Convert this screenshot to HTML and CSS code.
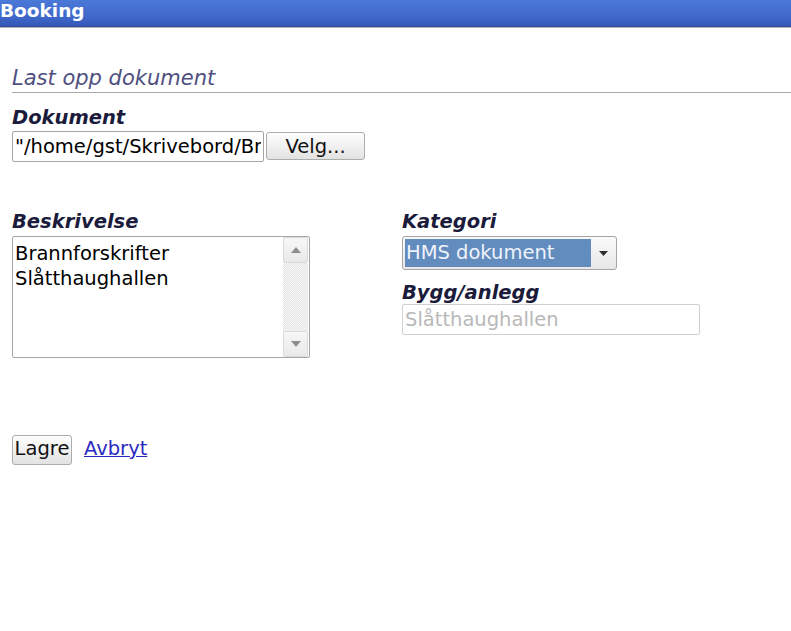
FILE: index.html
```html
<!DOCTYPE html>
<html lang="no">
<head>
<meta charset="utf-8">
<title>Booking</title>
<link rel="stylesheet" href="styles.css">
</head>
<body>
<header class="titlebar">Booking</header>
<main class="page">
  <h2 class="section-title">Last opp dokument</h2>
  <label class="label">Dokument</label>
  <div class="file-row">
    <input class="text-input file-path" type="text" value="&quot;/home/gst/Skrivebord/Brannforskrifter.pdf&quot;" readonly>
    <button class="btn browse" type="button">Velg...</button>
  </div>

  <div class="columns">
    <div class="col col-left">
      <label class="label first">Beskrivelse</label>
      <div class="textbox">
        <textarea class="textarea">Brannforskrifter
Slåtthaughallen</textarea>
        <div class="scrollbar">
          <div class="sb-btn">
            <svg width="10" height="6" viewBox="0 0 10 6"><path d="M0 6 L5 0 L10 6 Z" fill="#8e8e8e"/></svg>
          </div>
          <div class="sb-track"></div>
          <div class="sb-btn">
            <svg width="10" height="6" viewBox="0 0 10 6"><path d="M0 0 L10 0 L5 6 Z" fill="#8e8e8e"/></svg>
          </div>
        </div>
      </div>
    </div>
    <div class="col col-right">
      <label class="label first">Kategori</label>
      <div class="select">
        <span class="select-value">HMS dokument</span>
        <span class="select-arrow">
          <svg width="9" height="5" viewBox="0 0 9 5"><path d="M0 0 L9 0 L4.5 5 Z" fill="#2e2e2e"/></svg>
        </span>
      </div>
      <label class="label second">Bygg/anlegg</label>
      <input class="text-input disabled" type="text" value="Slåtthaughallen" disabled>
    </div>
  </div>

  <div class="actions">
    <button class="btn save" type="button">Lagre</button>
    <a class="link" href="#">Avbryt</a>
  </div>
</main>
</body>
</html>
```

FILE: styles.css
```css
html, body {
  margin: 0;
  background: #ffffff;
}

body {
  font-family: "DejaVu Sans", "Noto Sans", sans-serif;
  font-size: 19.5px;
  color: #000;
}

.titlebar {
  height: 26px;
  line-height: 22px;
  background: linear-gradient(#4b79d8, #3f67ca 65%, #3457b6);
  border-bottom: 1px solid #2d4c9e;
  box-shadow: 0 1px 0 #b6b6b6;
  color: #ffffff;
  font-weight: bold;
  font-size: 18.5px;
}

.page {
  padding-left: 12px;
}

.section-title {
  margin: 39px 0 0;
  font-size: 21px;
  font-weight: normal;
  font-style: italic;
  color: #4f4f80;
  line-height: 25px;
  padding-bottom: 1px;
  border-bottom: 1px solid #aaaaaa;
}

.label {
  display: block;
  font-weight: bold;
  font-style: italic;
  color: #1b1b3c;
  line-height: 23px;
  margin-top: 13px;
}

.label.first {
  margin-top: 0;
}

.label.second {
  margin-top: 11px;
}

.file-row {
  display: flex;
  align-items: flex-start;
  gap: 2px;
  margin-top: 2px;
}

.text-input {
  box-sizing: border-box;
  height: 31px;
  margin: 0;
  padding: 0 2px;
  border: 1px solid #a6a6a6;
  border-radius: 2px;
  font: inherit;
  color: #000;
  background: #fff;
  outline: none;
}

.file-path {
  width: 252px;
}

.btn {
  box-sizing: border-box;
  margin: 0;
  padding: 0;
  border: 1px solid #acacac;
  border-radius: 3px;
  background: linear-gradient(#fdfdfd, #f1f1f1 50%, #e2e2e2);
  font: inherit;
  color: #111;
}

.browse {
  margin-top: 1px;
  width: 99px;
  height: 28px;
}

.columns {
  display: flex;
  gap: 92px;
  margin-top: 48px;
}

.col-left {
  width: 298px;
}

.col-right {
  width: 298px;
}

.textbox {
  display: flex;
  box-sizing: border-box;
  width: 298px;
  height: 122px;
  margin-top: 3px;
  border: 1px solid #a6a6a6;
  border-radius: 2px;
  background: #fff;
}

.textarea {
  flex: 1;
  min-width: 0;
  margin: 0;
  padding: 4px 2px 3px;
  border: 0;
  resize: none;
  overflow: hidden;
  font: inherit;
  line-height: 25px;
  color: #000;
  background: transparent;
  outline: none;
}

.scrollbar {
  display: flex;
  flex-direction: column;
  width: 25px;
  margin-right: 1px;
}

.sb-btn {
  box-sizing: border-box;
  height: 26px;
  display: flex;
  align-items: center;
  justify-content: center;
  border: 1px solid #dadada;
  border-radius: 2px;
  background: linear-gradient(#f7f7f7, #e9e9e9);
}

.sb-track {
  flex: 1;
  background: repeating-conic-gradient(#e3e3e3 0 25%, #f8f8f8 0 50%) 0 0 / 2px 2px;
}

.select {
  display: flex;
  box-sizing: border-box;
  width: 215px;
  height: 34px;
  margin-top: 3px;
  padding: 2px 1px 2px 2px;
  border: 1px solid #a6a6a6;
  border-radius: 3px;
  background: linear-gradient(#fafafa, #e8e8e8);
}

.select-value {
  flex: 1;
  padding-left: 1px;
  line-height: 28px;
  background: #638cbe;
  color: #eef3fb;
}

.select-arrow {
  width: 24px;
  display: flex;
  align-items: center;
  justify-content: center;
}

.disabled {
  width: 298px;
  border-color: #d0d0d0;
  color: #b8b8b8;
  background: #fff;
}

.actions {
  display: flex;
  align-items: baseline;
  gap: 12px;
  margin-top: 77px;
}

.save {
  width: 60px;
  height: 30px;
  padding-bottom: 4px;
}

.link {
  color: #2a2abf;
  text-decoration: underline;
}
```
